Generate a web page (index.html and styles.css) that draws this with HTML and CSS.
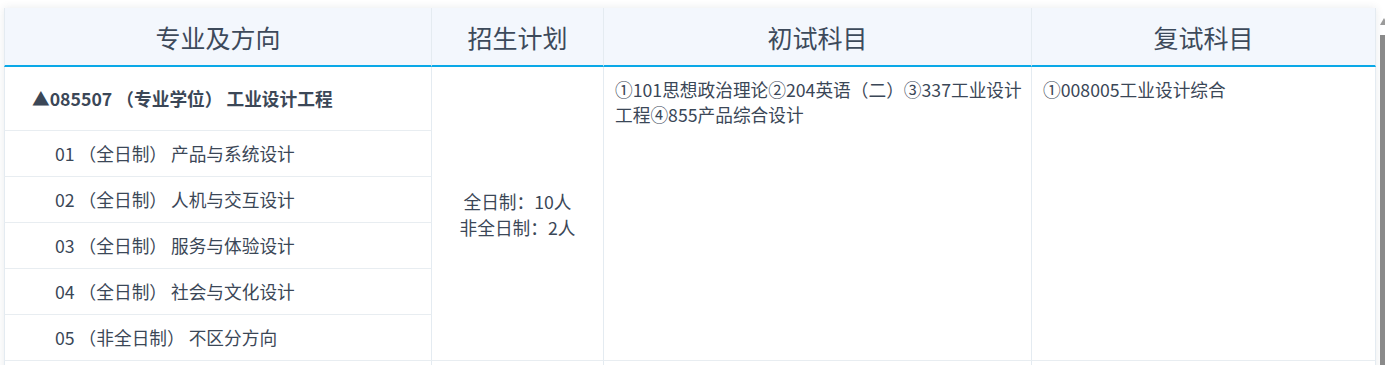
FILE: index.html
```html
<!DOCTYPE html>
<html lang="zh-CN">
<head>
<meta charset="utf-8">
<title>招生计划</title>
<link rel="stylesheet" href="styles.css">
</head>
<body>
<div class="page">
  <div class="card">
    <table class="plan">
      <colgroup>
        <col class="c1"><col class="c2"><col class="c3"><col class="c4">
      </colgroup>
      <thead>
        <tr><th>专业及方向</th><th>招生计划</th><th>初试科目</th><th class="last">复试科目</th></tr>
      </thead>
      <tbody>
        <tr>
          <td class="major">▲085507 （专业学位） 工业设计工程</td>
          <td class="quota" rowspan="6">全日制：10人<br>非全日制：2人</td>
          <td class="subjects" rowspan="6">①101思想政治理论②204英语（二）③337工业设计工程④855产品综合设计</td>
          <td class="subjects last" rowspan="6">①008005工业设计综合</td>
        </tr>
        <tr><td class="dir">01 （全日制） 产品与系统设计</td></tr>
        <tr><td class="dir">02 （全日制） 人机与交互设计</td></tr>
        <tr><td class="dir">03 （全日制） 服务与体验设计</td></tr>
        <tr><td class="dir">04 （全日制） 社会与文化设计</td></tr>
        <tr><td class="dir">05 （非全日制） 不区分方向</td></tr>
        <tr class="next"><td class="major"></td><td></td><td></td><td></td></tr>
      </tbody>
    </table>
  </div>
  <div class="scrollbar">
    <div class="arrow"></div>
    <div class="thumb"></div>
  </div>
</div>
</body>
</html>
```
FILE: styles.css
```css
html, body {
  margin: 0;
  padding: 0;
  overflow: hidden;
  background: #ffffff;
}
body {
  font-family: "Noto Sans CJK SC", "Noto Sans", sans-serif;
  color: #3b4757;
}
.page {
  display: flex;
  align-items: stretch;
  padding: 8px 0 0 4px;
  height: 420px;
  box-sizing: border-box;
}
.card {
  width: 1372px;
  flex: none;
  box-shadow: 0 0 8px rgba(40, 60, 80, 0.10);
  background: #fff;
  align-self: flex-start;
}
.plan {
  width: 1372px;
  table-layout: fixed;
  border-collapse: separate;
  border-spacing: 0;
}
.c1 { width: 428px; }
.c2 { width: 172px; }
.c3 { width: 428px; }
.c4 { width: 344px; }

.plan th {
  height: 57px;
  padding: 0;
  background: #f3f7fd;
  font-size: 25px;
  font-weight: normal;
  text-align: center;
  vertical-align: middle;
  color: #3d4a5b;
  border-right: 1px solid #e4ebf1;
  border-bottom: 2px solid #0aa8e7;
}
.plan th:first-child,
.plan .major,
.plan .dir {
  border-left: 1px solid #e4ebf1;
}
.plan td {
  padding: 0;
  font-size: 17.7px;
  line-height: 25px;
  border-right: 1px solid #e4ebf1;
  border-bottom: 1px solid #e8edf1;
  vertical-align: middle;
}
.plan .major {
  height: 63px;
  padding-left: 27px;
  font-weight: bold;
}
.plan .dir {
  height: 45px;
  padding-left: 50px;
}
.plan .next td,
.plan .next .major {
  height: 45px;
}
.plan .quota {
  text-align: center;
  line-height: 26px;
}
.plan .subjects {
  vertical-align: top;
  padding: 10px 8px 0 11px;
}
.scrollbar {
  flex: none;
  width: 8px;
  margin-left: 4px;
  margin-top: -8px;
  display: flex;
  flex-direction: column;
  align-items: flex-start;
}
.arrow {
  margin-top: 18px;
  width: 0;
  height: 0;
  border-left: 4px solid transparent;
  border-right: 4px solid transparent;
  border-bottom: 7px solid #9a9a9a;
}
.thumb {
  margin-top: 10px;
  width: 8px;
  flex: 1;
  background: #8a8a8a;
}
```
